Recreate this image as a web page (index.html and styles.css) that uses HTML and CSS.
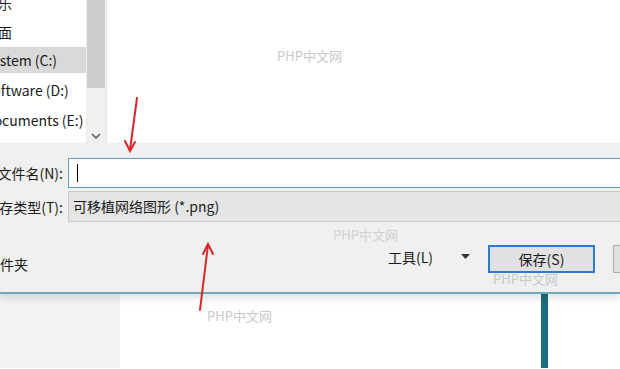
FILE: index.html
```html
<!DOCTYPE html>
<html lang="zh-CN">
<head>
    <meta charset="UTF-8">
    <title>另存为</title>
    <link rel="stylesheet" href="styles.css">
</head>
<body>
    <div class="screen">
        <!-- parte de cima: painel de navegação e lista de arquivos -->
        <div class="top">
            <div class="nav">
                <div class="nav-list">
                    <div class="nav-item first">音乐</div>
                    <div class="nav-item">桌面</div>
                    <div class="nav-item selected">System (C:)</div>
                    <div class="nav-item">Software (D:)</div>
                    <div class="nav-item">Documents (E:)</div>
                </div>
            </div>
            <div class="scrollbar">
                <div class="thumb"></div>
                <div class="chevron">
                    <svg width="10" height="6" viewBox="0 0 10 6"><path d="M1 1 L5 5 L9 1" fill="none" stroke="#606060" stroke-width="1.6"/></svg>
                </div>
            </div>
            <div class="files"></div>
        </div>

        <!-- parte de baixo: campos do diálogo -->
        <div class="panel">
            <div class="field-row">
                <label class="field-label"><span>文件名(N):</span></label>
                <div class="input"><span class="caret"></span></div>
            </div>
            <div class="field-row">
                <label class="field-label"><span>保存类型(T):</span></label>
                <div class="select">可移植网络图形 (*.png)</div>
            </div>
            <div class="actions">
                <span class="hide-folders">隐藏文件夹</span>
                <span class="tools">工具(L)</span>
                <span class="tools-arrow">
                    <svg width="9" height="5" viewBox="0 0 9 5"><path d="M0 0 H9 L4.5 5 Z" fill="#333"/></svg>
                </span>
                <button class="btn primary">保存(S)</button>
                <button class="btn">取消</button>
            </div>
        </div>

        <div class="below">
            <div class="below-left"></div>
            <div class="below-right"><div class="teal-bar"></div></div>
        </div>

        <!-- marcas d'água e setas vermelhas por cima -->
        <span class="wm wm1">PHP中文网</span>
        <span class="wm wm2">PHP中文网</span>
        <span class="wm wm3">PHP中文网</span>
        <span class="wm wm4">PHP中文网</span>
        <svg class="arrows" width="620" height="369" viewBox="0 0 620 369">
            <g stroke="#d8262a" stroke-width="2" fill="none" stroke-linecap="round">
                <path d="M137 98 L130 150"/>
                <path d="M125 141 L130 151 L135 142"/>
                <path d="M200 310 L208 245"/>
                <path d="M203 254 L208 244 L213 254"/>
            </g>
        </svg>
    </div>
</body>
</html>
```

FILE: styles.css
```css
* {
    box-sizing: border-box;
}

body {
    margin: 0;
    font-family: "Noto Sans CJK SC", "Noto Sans", "Liberation Sans", sans-serif;
    font-size: 14px;
    color: #1a1a1a;
    background: #fff;
}

.screen {
    position: relative;
    width: 620px;
    height: 369px;
    overflow: hidden;
}

/* parte de cima */
.top {
    display: flex;
    height: 143px;
    background: #fff;
}

.nav {
    width: 86px;
    overflow: hidden;
}

.nav-list {
    margin-left: -18px;
    margin-top: -11px;
}

.nav-item {
    height: 30px;
    line-height: 30px;
    padding-left: 2px;
    white-space: nowrap;
}

.nav-item.first {
    height: 28px;
    line-height: 28px;
}

.nav-item.selected {
    background: #d9d9d9;
    height: 26px;
    line-height: 26px;
    margin-bottom: 2px;
}

.scrollbar {
    width: 20px;
    background: #f0f0f0;
    display: flex;
    flex-direction: column;
    padding: 0 1px;
}

.thumb {
    height: 92px;
    background: #cdcdcd;
}

.chevron {
    margin-top: 35px;
    text-align: center;
}

.files {
    flex: 1;
    border-left: 1px solid #e6e6e6;
}

/* painel do diálogo */
.panel {
    height: 151px;
    background: #f0f0f0;
    padding-top: 14px;
    border-bottom: 2px solid #6fa9b6;
    box-shadow: 0 4px 8px rgba(0, 0, 0, 0.12);
    position: relative;
}

.field-row {
    display: flex;
    align-items: center;
    height: 31px;
    margin-bottom: 3px;
}

.field-label {
    width: 68px;
    flex-shrink: 0;
    padding-right: 5px;
    display: flex;
    justify-content: flex-end;
    overflow: hidden;
}

.field-label span {
    flex-shrink: 0;
    white-space: nowrap;
}

.input {
    flex: 1;
    height: 30px;
    background: #fff;
    border: 1px solid #5b9bd1;
    border-right: none;
    display: flex;
    align-items: center;
    padding-left: 8px;
}

.caret {
    width: 1px;
    height: 18px;
    background: #000;
}

.select {
    flex: 1;
    height: 31px;
    line-height: 29px;
    background: #e5e5e5;
    border: 1px solid #c8c8c8;
    border-right: none;
    padding-left: 4px;
}

.actions {
    display: flex;
    align-items: center;
    margin-top: 22px;
    height: 30px;
}

.actions > * {
    flex-shrink: 0;
}

.hide-folders {
    margin-left: -42px;
    margin-top: 10px;
    width: 430px;
    white-space: nowrap;
}

.tools {
    width: 73px;
    margin-top: -4px;
}

.tools-arrow {
    width: 27px;
    margin-top: -6px;
    display: flex;
}

.btn {
    font-family: inherit;
    font-size: 14px;
    height: 28px;
    background: #e1e1e1;
    border: 1px solid #adadad;
    color: #1a1a1a;
    padding: 0;
}

.btn.primary {
    width: 107px;
    border: 2px solid #2b7bd4;
    margin-right: 18px;
}

.btn:not(.primary) {
    width: 80px;
}

/* área de baixo */
.below {
    display: flex;
    height: 74px;
}

.below-left {
    width: 120px;
    background: #f2f2f2;
}

.below-right {
    flex: 1;
    background: #fff;
}

.teal-bar {
    margin-left: 421px;
    width: 7px;
    height: 100%;
    background: #1d6e7e;
}

/* marcas d'água */
.wm {
    position: absolute;
    font-size: 13px;
    color: #c9c9c9;
    white-space: nowrap;
}

.wm1 { left: 277px; top: 46px; }
.wm2 { left: 333px; top: 225px; color: #d2d2d2; }
.wm3 { left: 493px; top: 269px; color: #c4c8d4; }
.wm4 { left: 207px; top: 306px; }

.arrows {
    position: absolute;
    left: 0;
    top: 0;
}
```
